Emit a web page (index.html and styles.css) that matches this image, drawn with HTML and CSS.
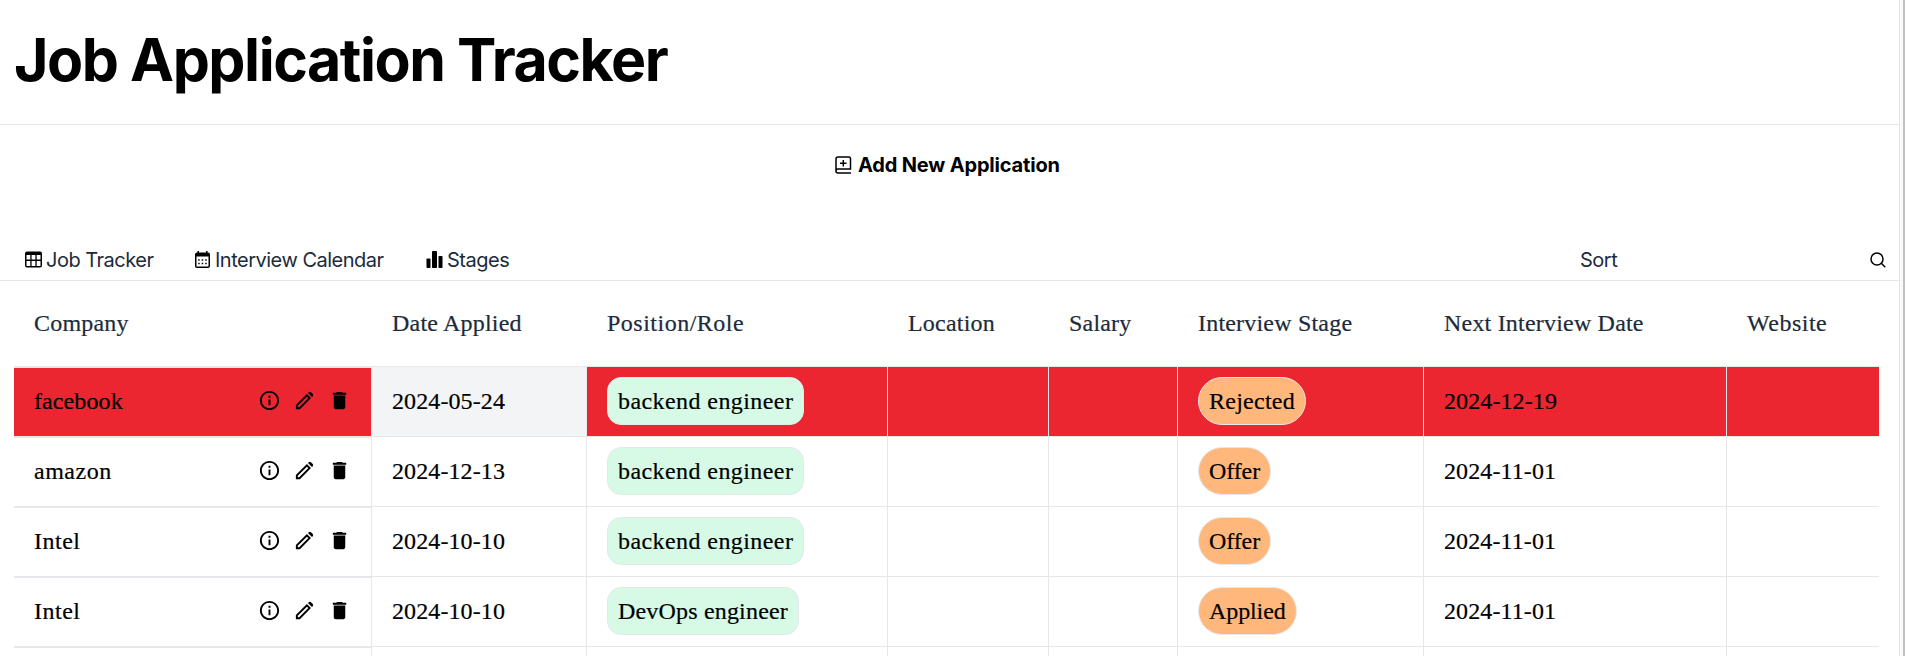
FILE: index.html
```html
<!DOCTYPE html>
<html lang="en">
<head>
<meta charset="utf-8">
<title>Job Application Tracker</title>
<link rel="stylesheet" href="styles.css">
</head>
<body>
<svg class="defs" width="0" height="0">
  <symbol id="info" viewBox="0 0 24 24"><path d="M11 7h2v2h-2zm0 4h2v6h-2zm1-9C6.480 2 2 6.480 2 12s4.480 10 10 10 10-4.480 10-10S17.520 2 12 2zm0 18c-4.410 0-8-3.590-8-8s3.590-8 8-8 8 3.590 8 8-3.590 8-8 8z"/></symbol>
  <symbol id="edit" viewBox="0 0 24 24"><path fill-rule="evenodd" d="M3 21v-4.250L14.500 5.270l4.250 4.250L7.250 21ZM5 19h1.400l9.600-9.500-1.500-1.500L5 17.600ZM15.600 4.200l.6-.625a2 2 0 0 1 2.800 0L20.425 5a2 2 0 0 1 0 2.800l-.6.6Z"/></symbol>
  <symbol id="trash" viewBox="0 0 24 24"><path d="M6 19c0 1.100.9 2 2 2h8c1.100 0 2-.9 2-2V7H6v12zM19 4h-3.500l-1-1h-5l-1 1H5v2h14V4z"/><path d="M6 6h12v1H6z" opacity=".5"/></symbol>
</svg>
<div class="page">
  <main class="content">
    <header class="header"><h1 class="title">Job Application Tracker</h1></header>
    <div class="add">
      <svg class="add-icon" viewBox="0 0 17 18" fill="none" stroke="#000" stroke-width="1.500"><path d="M16 17H3a2 2 0 0 1 0-4h12.500M1 15V3a2 2 0 0 1 2-2h11a1.500 1.500 0 0 1 1.500 1.500V13.700M8.300 4v6.500M5 7.200h6.500"/></svg>
      <span class="add-label">Add New Application</span>
    </div>
    <nav class="nav">
      <a class="tab tab-tracker"><svg class="tab-icon" viewBox="0 0 17 17"><path fill-rule="evenodd" d="M2 .5h13a2 2 0 0 1 2 2v12a2 2 0 0 1-2 2H2a2 2 0 0 1-2-2v-12a2 2 0 0 1 2-2zM1.500 4v4.500h3.800V4zM6.600 4v4.500h3.800V4zM11.700 4v4.500h3.800V4zM1.500 10v5h3.800v-5zM6.600 10v5h3.800v-5zM11.700 10v5h3.800v-5z"/></svg><span>Job Tracker</span></a>
      <a class="tab tab-calendar"><svg class="tab-icon" viewBox="0 0 17 17"><path fill-rule="evenodd" d="M3.500 0h1.500v1.500h7V0h1.500v1.500H14a2 2 0 0 1 2 2V15a2 2 0 0 1-2 2H3a2 2 0 0 1-2-2V3.500a2 2 0 0 1 2-2h.5zM2.500 5.500V15q0 .5.500.5h11q.5 0 .5-.5V5.500z"/><path stroke="#000" stroke-width="1.500" stroke-dasharray="1.500 2" d="M4.200 9h9M4.200 12.500h9"/></svg><span>Interview Calendar</span></a>
      <a class="tab tab-stages"><svg class="tab-icon" viewBox="0 0 17 17"><rect x="0.500" y="7.500" width="4" height="9.500" rx=".8"/><rect x="6" width="5" height="17" rx=".8"/><rect x="12.500" y="5" width="4" height="12" rx=".8"/></svg><span>Stages</span></a>
      <span class="sort">Sort</span>
      <svg class="search" viewBox="0 0 16 16" fill="none" stroke="#000" stroke-width="1.500"><circle cx="7" cy="7" r="6"/><path d="m11.300 11.300 4 4"/></svg>
    </nav>
    <section class="table">
      <div class="row head">
        <div class="cell">Company</div><div class="cell">Date Applied</div><div class="cell wide">Position/Role</div><div class="cell">Location</div><div class="cell">Salary</div><div class="cell">Interview Stage</div><div class="cell">Next Interview Date</div><div class="cell wide">Website</div>
      </div>
      <div class="row rejected">
        <div class="cell company"><span>facebook</span><span class="actions"><svg><use href="#info"/></svg><svg><use href="#edit"/></svg><svg><use href="#trash"/></svg></span></div>
        <div class="cell date hovered">2024-05-24</div><div class="cell"><span class="role">backend engineer</span></div><div class="cell"></div><div class="cell"></div><div class="cell"><span class="stage">Rejected</span></div><div class="cell date">2024-12-19</div><div class="cell"></div>
      </div>
      <div class="row">
        <div class="cell company wide"><span>amazon</span><span class="actions"><svg><use href="#info"/></svg><svg><use href="#edit"/></svg><svg><use href="#trash"/></svg></span></div>
        <div class="cell date">2024-12-13</div><div class="cell"><span class="role">backend engineer</span></div><div class="cell"></div><div class="cell"></div><div class="cell"><span class="stage short">Offer</span></div><div class="cell date">2024-11-01</div><div class="cell"></div>
      </div>
      <div class="row">
        <div class="cell company wide"><span>Intel</span><span class="actions"><svg><use href="#info"/></svg><svg><use href="#edit"/></svg><svg><use href="#trash"/></svg></span></div>
        <div class="cell date">2024-10-10</div><div class="cell"><span class="role">backend engineer</span></div><div class="cell"></div><div class="cell"></div><div class="cell"><span class="stage short">Offer</span></div><div class="cell date">2024-11-01</div><div class="cell"></div>
      </div>
      <div class="row">
        <div class="cell company wide"><span>Intel</span><span class="actions"><svg><use href="#info"/></svg><svg><use href="#edit"/></svg><svg><use href="#trash"/></svg></span></div>
        <div class="cell date">2024-10-10</div><div class="cell"><span class="role devops">DevOps engineer</span></div><div class="cell"></div><div class="cell"></div><div class="cell"><span class="stage short">Applied</span></div><div class="cell date">2024-11-01</div><div class="cell"></div>
      </div>
      <div class="row last">
        <div class="cell company"></div><div class="cell"></div><div class="cell"></div><div class="cell"></div><div class="cell"></div><div class="cell"></div><div class="cell"></div><div class="cell"></div>
      </div>
    </section>
  </main>
  <div class="scrollbar"></div>
</div>
</body>
</html>
```
FILE: styles.css
```css
* { box-sizing: border-box; }
body { margin: 0; background: #fff; color: #000; font-family: Inter, sans-serif; }
.defs { display: none; }
.page { display: flex; height: 656px; overflow: hidden; }
.content { width: 1899px; flex: none; }
.scrollbar { width: 6px; border-left: 1px solid #e5e5e5; border-right: 2px solid #c1c1c1; background: #fafafa; }

.header { height: 125px; padding: 30px 14px 0; border-bottom: 1px solid #e5e7eb; }
.title { margin: 0; font-size: 59px; line-height: 60px; font-weight: 700; letter-spacing: -1.45px; white-space: nowrap; }

.add { height: 80px; padding-left: 835px; display: flex; align-items: center; }
.add-icon { width: 17px; height: 18px; margin-right: 6px; }
.add-label { font-size: 20px; font-weight: 700; letter-spacing: -0.17px; }

.nav { height: 76px; padding: 34px 13px 0 25px; display: flex; align-items: center; border-bottom: 1px solid #e5e7eb; color: #1c2b3a; font-size: 20px; letter-spacing: -0.5px; }
.tab { display: flex; align-items: center; gap: 4px; white-space: nowrap; }
.tab-icon { width: 17px; height: 17px; fill: #000; }
.tab-tracker { width: 169px; }
.tab-calendar { width: 232px; }
.sort { margin-left: auto; width: 290px; }
.search { width: 16px; height: 16px; }

.table { margin-left: 14px; width: 1865px; font: 24px/32px "Liberation Serif", serif; -webkit-text-stroke: 0.2px; }
.row { display: grid; grid-template-columns: 357px 215px 301px 161px 129px 246px 303px 153px; height: 70px; }
.head { height: 85px; color: #1c2b3a; }
.cell { display: flex; align-items: center; padding: 0 0 2px 20px; border-top: 1px solid #e5e7eb; border-left: 1px solid #e5e7eb; white-space: nowrap; letter-spacing: 0.1px; }
.head .cell { border-color: transparent; letter-spacing: 0.2px; }
.head .cell:first-child { padding-left: 19px; }
.cell.company { border-left: 0; border-top-width: 2px; justify-content: space-between; padding-right: 20px; padding-bottom: 3px; }
.wide, .head .wide { letter-spacing: 0.5px; }
.rejected .cell { background-color: #eb2630; }
.rejected .company { background-clip: padding-box; }
.rejected .hovered { background-color: #f3f4f6; }
.actions { display: flex; gap: 12px; }
.actions svg { width: 23px; height: 23px; }
.role, .stage { height: 48px; padding: 0 10px; border: 1px solid #e5e7eb; display: flex; align-items: center; }
.role { border-radius: 14px; background: #d7fae6; letter-spacing: 0.42px; }
.devops { letter-spacing: 0.18px; }
.stage { border-radius: 24px; background: #ffb77c; letter-spacing: 0.25px; }
.short { letter-spacing: -0.1px; }
```
